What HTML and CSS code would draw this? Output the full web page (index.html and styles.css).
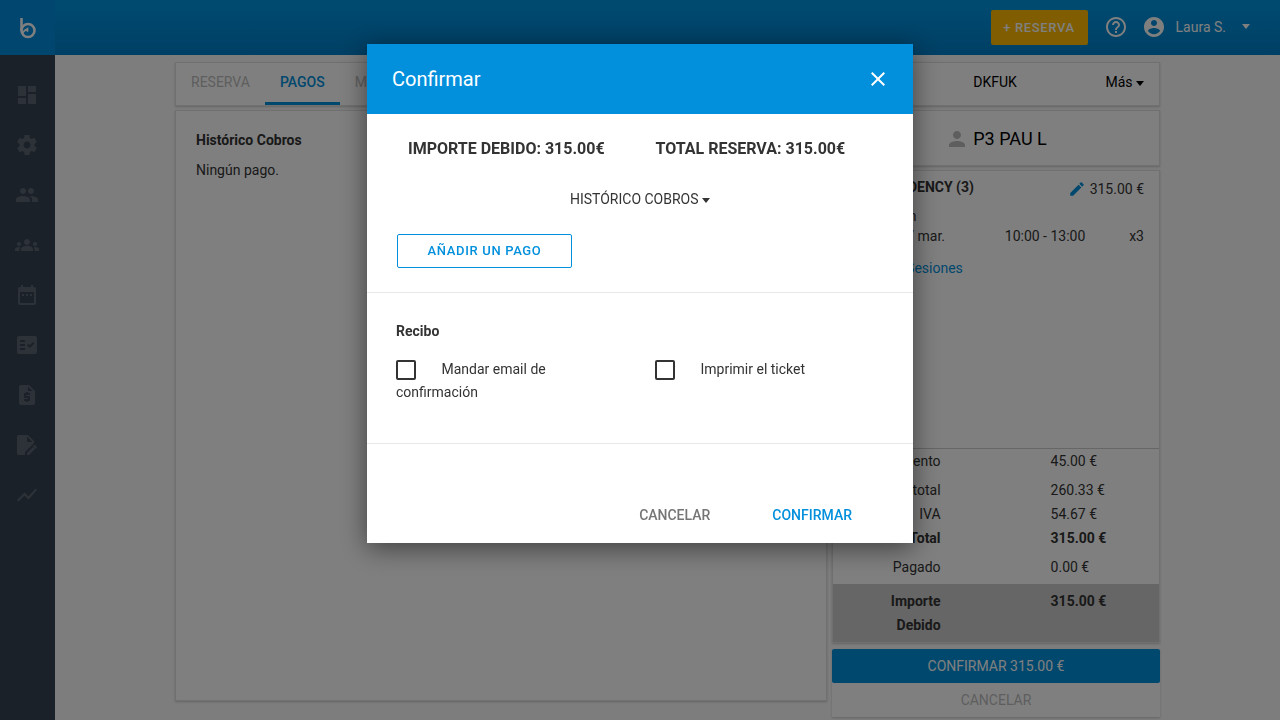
FILE: index.html
```html
<!DOCTYPE html>
<html lang="es">
<head>
    <meta charset="UTF-8">
    <meta name="viewport" content="width=device-width, initial-scale=1.0">
    <title>Reserva - Pagos</title>
    <link rel="stylesheet" href="styles.css">
</head>
<body>
    <header class="topbar">
        <a href="#" class="logo" aria-label="Inicio">
            <svg width="18" height="24" viewBox="0 0 18 24" fill="none" stroke="#fff" stroke-width="2.6">
                <path d="M2.500 2v12.500"/>
                <circle cx="9" cy="14.500" r="6.500"/>
                <path d="M3.500 18c.5-2.500 2-4 4.500-4.200M5.500 14.500l3-1.700v3" stroke-width="1.800"/>
            </svg>
        </a>
        <button type="button" class="new-btn">+ RESERVA</button>
        <a href="#" class="top-icon" aria-label="Ayuda">
            <svg width="24" height="24" viewBox="0 0 24 24"><path d="M11 18h2v-2h-2v2zm1-16C6.480 2 2 6.480 2 12s4.480 10 10 10 10-4.480 10-10S17.520 2 12 2zm0 18c-4.410 0-8-3.590-8-8s3.590-8 8-8 8 3.590 8 8-3.590 8-8 8zm0-14c-2.210 0-4 1.790-4 4h2c0-1.100.9-2 2-2s2 .9 2 2c0 2-3 1.750-3 5h2c0-2.250 3-2.500 3-5 0-2.210-1.790-4-4-4z"/></svg>
        </a>
        <button type="button" class="user">
            <svg width="24" height="24" viewBox="0 0 24 24"><path d="M12 2C6.480 2 2 6.480 2 12s4.480 10 10 10 10-4.480 10-10S17.520 2 12 2zm0 3c1.660 0 3 1.340 3 3s-1.340 3-3 3-3-1.340-3-3 1.340-3 3-3zm0 14.200c-2.500 0-4.710-1.280-6-3.220.03-1.990 4-3.080 6-3.080 1.990 0 5.970 1.090 6 3.080-1.290 1.940-3.500 3.220-6 3.220z"/></svg>
            <span>Laura S.</span>
            <span class="caret"></span>
        </button>
    </header>

    <div class="layout">
        <nav class="sidebar">
            <a href="#" aria-label="Panel"><svg viewBox="0 0 24 24"><path d="M3 13h8V3H3v10zm0 8h8v-6H3v6zm10 0h8V11h-8v10zm0-18v6h8V3h-8z"/></svg></a>
            <a href="#" aria-label="Ajustes"><svg viewBox="0 0 24 24"><path d="M19.430 12.980c.04-.32.07-.64.07-.98s-.03-.66-.07-.98l2.110-1.650c.19-.15.24-.42.12-.64l-2-3.460c-.12-.22-.39-.3-.61-.22l-2.490 1c-.52-.4-1.080-.73-1.690-.98l-.38-2.650C14.460 2.180 14.250 2 14 2h-4c-.25 0-.46.18-.49.42l-.38 2.650c-.61.25-1.170.59-1.690.98l-2.490-1c-.23-.09-.49 0-.61.22l-2 3.460c-.13.22-.07.49.12.64l2.110 1.650c-.04.32-.07.65-.07.98s.03.66.07.98l-2.110 1.650c-.19.15-.24.42-.12.64l2 3.460c.12.22.39.3.61.22l2.490-1c.52.4 1.080.73 1.690.98l.38 2.650c.03.24.24.42.49.42h4c.25 0 .46-.18.49-.42l.38-2.650c.61-.25 1.170-.59 1.690-.98l2.490 1c.23.09.49 0 .61-.22l2-3.460c.12-.22.07-.49-.12-.64l-2.110-1.650zM12 15.500c-1.930 0-3.500-1.570-3.500-3.500s1.570-3.500 3.500-3.500 3.500 1.570 3.500 3.500-1.570 3.500-3.500 3.500z"/></svg></a>
            <a href="#" aria-label="Clientes"><svg viewBox="0 0 24 24"><path d="M16 11c1.660 0 2.990-1.340 2.990-3S17.660 5 16 5s-3 1.340-3 3 1.340 3 3 3zm-8 0c1.660 0 2.990-1.340 2.990-3S9.660 5 8 5 5 6.340 5 8s1.340 3 3 3zm0 2c-2.330 0-7 1.170-7 3.500V19h14v-2.500c0-2.330-4.670-3.500-7-3.500zm8 0c-.29 0-.62.02-.97.05 1.160.84 1.970 1.970 1.970 3.450V19h6v-2.500c0-2.330-4.670-3.500-7-3.500z"/></svg></a>
            <a href="#" aria-label="Grupos"><svg viewBox="0 0 24 24"><path d="M12 12.750c1.630 0 3.070.39 4.240.9 1.080.48 1.760 1.560 1.760 2.730V18H6v-1.610c0-1.180.68-2.260 1.760-2.730 1.170-.52 2.610-.91 4.240-.91zM4 13c1.100 0 2-.9 2-2s-.9-2-2-2-2 .9-2 2 .9 2 2 2zm1.130 1.100c-.37-.06-.74-.1-1.130-.1-.99 0-1.930.21-2.780.58C.48 14.900 0 15.620 0 16.430V18h4.500v-1.610c0-.83.23-1.610.63-2.290zM20 13c1.100 0 2-.9 2-2s-.9-2-2-2-2 .9-2 2 .9 2 2 2zm4 3.430c0-.81-.48-1.530-1.220-1.850-.85-.37-1.790-.58-2.780-.58-.39 0-.76.04-1.130.1.4.68.63 1.460.63 2.290V18H24v-1.570zM12 6c1.660 0 3 1.340 3 3s-1.340 3-3 3-3-1.340-3-3 1.340-3 3-3z"/></svg></a>
            <a href="#" aria-label="Calendario"><svg viewBox="0 0 24 24"><path d="M9 11H7v2h2v-2zm4 0h-2v2h2v-2zm4 0h-2v2h2v-2zm2-7h-1V2h-2v2H8V2H6v2H5c-1.110 0-2 .9-2 2v14c0 1.100.89 2 2 2h14c1.100 0 2-.9 2-2V6c0-1.100-.9-2-2-2zm0 16H5V9h14v11z"/></svg></a>
            <a href="#" aria-label="Tareas"><svg viewBox="0 0 24 24"><path fill-rule="evenodd" d="M20 3H4c-1.100 0-2 .9-2 2v14c0 1.100.9 2 2 2h16c1.100 0 2-.9 2-2V5c0-1.100-.9-2-2-2zM10 17H5v-2h5v2zm0-4H5v-2h5v2zm0-4H5V7h5v2zm4.820 6L12 12.160l1.410-1.410 1.410 1.420L17.990 9l1.420 1.420L14.820 15z"/></svg></a>
            <a href="#" aria-label="Facturas"><svg viewBox="0 0 24 24"><path fill-rule="evenodd" d="M14 2H6c-1.100 0-2 .9-2 2v16c0 1.100.89 2 1.990 2H18c1.100 0 2-.9 2-2V8l-6-6zm1 10h-4v1h3c.55 0 1 .45 1 1v3c0 .55-.45 1-1 1h-1v1h-2v-1H9v-2h4v-1h-3c-.55 0-1-.45-1-1v-3c0-.55.45-1 1-1h1V9h2v1h2v2zm-2-4V3.500L17.500 8H13z"/></svg></a>
            <a href="#" aria-label="Contratos"><svg viewBox="0 0 24 24"><path d="M13 2H4c-1.100 0-2 .9-2 2v16c0 1.100.9 2 2 2h6v-3l9-9V8l-6-6zm-1 7V3.500L17.500 9H12zM12 20v2h2l6-6-2-2-6 6zm9.700-6.300l-1.400-1.400c-.4-.4-1-.4-1.400 0l-.9.9 2.800 2.800.9-.9c.4-.4.4-1 0-1.400z"/></svg></a>
            <a href="#" aria-label="Estadísticas"><svg viewBox="0 0 24 24"><path d="M3.500 18.490l6-6.010 4 4L22 6.920l-1.410-1.410-7.090 7.970-4-4L2 16.990z"/></svg></a>
        </nav>

        <main class="content">
            <div class="tabs panel">
                <a href="#" class="tab">RESERVA</a>
                <a href="#" class="tab active">PAGOS</a>
                <a href="#" class="tab">MAIL</a>
                <div class="booking-ref">
                    <span>DKFUK</span>
                    <button type="button" class="more">Más <span class="caret"></span></button>
                </div>
            </div>

            <div class="columns">
                <section class="history panel">
                    <h2>Histórico Cobros</h2>
                    <p>Ningún pago.</p>
                </section>

                <aside class="summary">
                    <div class="client panel">
                        <svg width="24" height="24" viewBox="0 0 24 24"><path d="M12 12c2.210 0 4-1.790 4-4s-1.790-4-4-4-4 1.790-4 4 1.790 4 4 4zm0 2c-2.670 0-8 1.340-8 4v2h16v-2c0-2.660-5.330-4-8-4z"/></svg>
                        <span>P3 PAU L</span>
                    </div>

                    <div class="order panel">
                        <div class="order-item">
                            <div class="item-row item-title">
                                <strong>SUP RESIDENCY (3)</strong>
                                <span class="price">
                                    <svg width="18" height="18" viewBox="0 0 24 24"><path d="M3 17.250V21h3.750L17.810 9.940l-3.750-3.750L3 17.250zM20.710 7.040c.39-.39.39-1.020 0-1.410l-2.340-2.340c-.39-.39-1.020-.39-1.410 0l-1.830 1.830 3.750 3.750 1.830-1.830z"/></svg>
                                    315.00 €
                                </span>
                            </div>
                            <div class="item-row">Inscripción</div>
                            <div class="item-row item-date">
                                <span>Viernes 17 mar.</span>
                                <span>10:00 - 13:00</span>
                                <span>x3</span>
                            </div>
                            <a href="#" class="sessions">Reservar Sesiones</a>
                        </div>
                        <table class="totals">
                            <tr><th>Descuento</th><td>45.00 €</td></tr>
                            <tr class="spaced"><th>Subtotal</th><td>260.33 €</td></tr>
                            <tr><th>IVA</th><td>54.67 €</td></tr>
                            <tr class="bold"><th>Total</th><td>315.00 €</td></tr>
                            <tr class="spaced"><th>Pagado</th><td>0.00 €</td></tr>
                        </table>
                        <table class="totals due">
                            <tr class="bold"><th>Importe Debido</th><td>315.00 €</td></tr>
                        </table>
                    </div>

                    <div class="actions">
                        <button type="button" class="pay-btn">CONFIRMAR 315.00 €</button>
                        <button type="button" class="discard-btn">CANCELAR</button>
                    </div>
                </aside>
            </div>
        </main>
    </div>

    <div class="overlay">
        <form class="modal" role="dialog" aria-labelledby="modal-title">
            <div class="modal-header">
                <h1 id="modal-title">Confirmar</h1>
                <button type="button" class="close" aria-label="Cerrar">
                    <svg width="24" height="24" viewBox="0 0 24 24"><path d="M19 6.410L17.590 5 12 10.590 6.410 5 5 6.410 10.590 12 5 17.590 6.410 19 12 13.410 17.590 19 19 17.590 13.410 12z"/></svg>
                </button>
            </div>
            <div class="modal-section payment">
                <div class="amounts">
                    <span>IMPORTE DEBIDO: 315.00€</span>
                    <span>TOTAL RESERVA: 315.00€</span>
                </div>
                <button type="button" class="history-toggle">HISTÓRICO COBROS <span class="caret"></span></button>
                <button type="button" class="add-btn">AÑADIR UN PAGO</button>
            </div>
            <div class="modal-section receipt">
                <h2>Recibo</h2>
                <div class="options">
                    <div>
                        <input type="checkbox" id="send-email">
                        <label for="send-email">Mandar email de confirmación</label>
                    </div>
                    <div>
                        <input type="checkbox" id="print-ticket">
                        <label for="print-ticket">Imprimir el ticket</label>
                    </div>
                </div>
            </div>
            <div class="modal-footer">
                <button type="button" class="cancel-btn">CANCELAR</button>
                <button type="submit" class="confirm-btn">CONFIRMAR</button>
            </div>
        </form>
    </div>
</body>
</html>
```

FILE: styles.css
```css
* {
    box-sizing: border-box;
}
body {
    font-family: Roboto, sans-serif;
    font-size: 14px;
    line-height: 24px;
    color: #333;
    background-color: #fafafa;
    height: 100vh;
    margin: 0;
    overflow: hidden;
}
h1, h2, p {
    margin: 0;
}
a {
    text-decoration: none;
}
button {
    font: inherit;
    color: inherit;
    background: none;
    border: none;
    padding: 0;
    cursor: pointer;
}
svg {
    display: block;
    fill: currentColor;
}
.caret {
    display: inline-block;
    border: 4px solid transparent;
    border-top: 5px solid currentColor;
    border-bottom: none;
    vertical-align: middle;
}

/* top bar */
.topbar {
    display: flex;
    align-items: center;
    height: 55px;
    padding: 0 30px 2px 0;
    color: #fff;
    background: linear-gradient(#0096e2, #007fca);
}
.logo {
    display: flex;
    align-items: center;
    justify-content: center;
    align-self: flex-start;
    width: 55px;
    height: 55px;
    margin-right: auto;
    background-color: #008cdc;
}
.logo svg {
    fill: none;
}
.new-btn {
    width: 97px;
    height: 35px;
    margin-top: 2px;
    border-radius: 2px;
    background-color: #ffbb00;
    font-size: 13px;
    font-weight: 500;
    letter-spacing: 0.05em;
}
.top-icon {
    margin: 0 14px 0 16px;
    color: #fff;
}
.user {
    display: flex;
    align-items: center;
}
.user span {
    margin-left: 10px;
}
.user .caret {
    margin-left: 16px;
}

/* side menu */
.layout {
    display: flex;
    height: calc(100vh - 55px);
}
.sidebar {
    flex: none;
    width: 55px;
    padding: 15px 1px 0 0;
    background-color: #374351;
}
.sidebar a {
    display: flex;
    align-items: center;
    justify-content: center;
    height: 50px;
    color: #5a6571;
}
.sidebar svg {
    width: 24px;
    height: 24px;
}

/* booking */
.content {
    flex: 1;
    max-width: 985px;
    margin: 0 auto;
    padding-top: 7px;
}
.panel {
    background-color: #fff;
    border: 1px solid #e0e0e0;
    box-shadow: 0 1px 2px rgba(0, 0, 0, 0.2);
}
.tabs {
    display: flex;
    height: 44px;
}
.tab {
    padding: 7px 15px 0;
    color: #bdbdbd;
}
.tab.active {
    color: #0290dd;
    font-weight: 500;
    border-bottom: 3px solid #0290dd;
}
.booking-ref {
    display: grid;
    grid-template-columns: 1fr 1fr 1fr;
    align-items: start;
    width: 328px;
    margin-left: auto;
    padding: 7px 15px 0;
    color: #000;
}
.booking-ref span:first-child {
    grid-column: 2;
    text-align: center;
}
.booking-ref .more {
    text-align: right;
}
.columns {
    display: grid;
    grid-template-columns: minmax(0, 1fr) 328px;
    gap: 5px;
    align-items: start;
    margin-top: 4px;
}
.history {
    height: 591px;
    padding: 17px 20px;
}
.history h2 {
    font-size: 14px;
    margin-bottom: 6px;
}
.client {
    display: flex;
    align-items: center;
    justify-content: center;
    gap: 4px;
    height: 56px;
    margin-bottom: 4px;
    padding-top: 2px;
    color: #000;
    font-size: 18px;
}
.client svg {
    color: #bdbdbd;
}
.order-item {
    height: 278px;
    padding: 4px 15px;
}
.item-row {
    line-height: 20px;
}
.item-title {
    display: flex;
    justify-content: space-between;
    height: 31px;
    padding-top: 2px;
}
.price {
    display: flex;
    gap: 4px;
    line-height: 25px;
}
.price svg {
    margin-top: 3px;
    color: #0290dd;
}
.item-date {
    display: grid;
    grid-template-columns: 1fr 1fr 1fr;
}
.item-date span:nth-child(2) {
    white-space: nowrap;
    text-align: right;
    margin-right: -40px;
}
.item-date span:last-child {
    text-align: right;
}
.sessions {
    display: block;
    margin-top: 10px;
    color: #0290dd;
}
.totals {
    width: 100%;
    border-spacing: 0;
    table-layout: fixed;
    box-shadow: 0 -1px #ccc;
}
.totals th {
    width: 33%;
    padding: 0 0 0 25px;
    font-weight: 400;
    text-align: right;
    vertical-align: top;
}
.totals td {
    padding: 0 0 0 110px;
    vertical-align: top;
}
.totals .spaced th,
.totals .spaced td {
    padding-top: 5px;
}
.totals .bold th,
.totals .bold td {
    font-weight: 700;
}
.due {
    margin-top: 5px;
    box-shadow: none;
    background-color: #ccc;
}
.due th,
.due td {
    padding-top: 5px;
    padding-bottom: 5px;
}
.actions {
    margin-top: 6px;
    background-color: #fff;
    box-shadow: 0 1px 2px rgba(0, 0, 0, 0.2);
}
.actions button {
    display: block;
    width: 100%;
    height: 34px;
}
.actions .pay-btn {
    border-radius: 2px;
    background-color: #0290dd;
    color: #fff;
}
.actions .discard-btn {
    color: #bdbdbd;
    line-height: 32px;
}

/* confirm dialog */
.overlay {
    position: fixed;
    inset: 0;
    display: flex;
    align-items: flex-start;
    justify-content: center;
    padding-top: 44px;
    background-color: rgba(0, 0, 0, 0.5);
}
.modal {
    width: 546px;
    background-color: #fff;
    box-shadow: 0 5px 25px rgba(0, 0, 0, 0.5);
}
.modal-header {
    display: flex;
    align-items: center;
    justify-content: space-between;
    height: 70px;
    padding: 0 23px 0 25px;
    color: #fff;
    background-color: #0290dd;
}
.modal-header h1 {
    font-size: 20px;
    font-weight: 400;
}
.modal-section {
    border-bottom: 1px solid #e8e8e8;
}
.payment {
    padding: 23px 30px 24px;
}
.amounts {
    display: grid;
    grid-template-columns: 1fr 1fr;
    gap: 20px;
    padding-left: 11px;
    font-size: 16px;
    font-weight: 700;
    white-space: nowrap;
}
.history-toggle {
    display: block;
    margin: 26px auto 23px;
}
.add-btn {
    width: 175px;
    height: 34px;
    border: 1px solid #0290dd;
    border-radius: 2px;
    color: #0290dd;
    font-size: 13px;
    font-weight: 500;
    letter-spacing: 0.05em;
}
.receipt {
    padding: 26px 29px 39px;
}
.receipt h2 {
    font-size: 14px;
    margin-bottom: 15px;
}
.options {
    display: grid;
    grid-template-columns: 1fr 1fr;
    gap: 30px;
    line-height: 23px;
}
.options input {
    appearance: none;
    width: 20px;
    height: 20px;
    margin: 0 22px 0 0;
    border: 2px solid #333;
    border-radius: 2px;
    vertical-align: middle;
}
.modal-footer {
    display: flex;
    justify-content: flex-end;
    gap: 62px;
    padding: 59px 61px 16px;
}
.cancel-btn {
    color: #757575;
    font-weight: 500;
}
.confirm-btn {
    color: #0290dd;
    font-weight: 500;
}
```
